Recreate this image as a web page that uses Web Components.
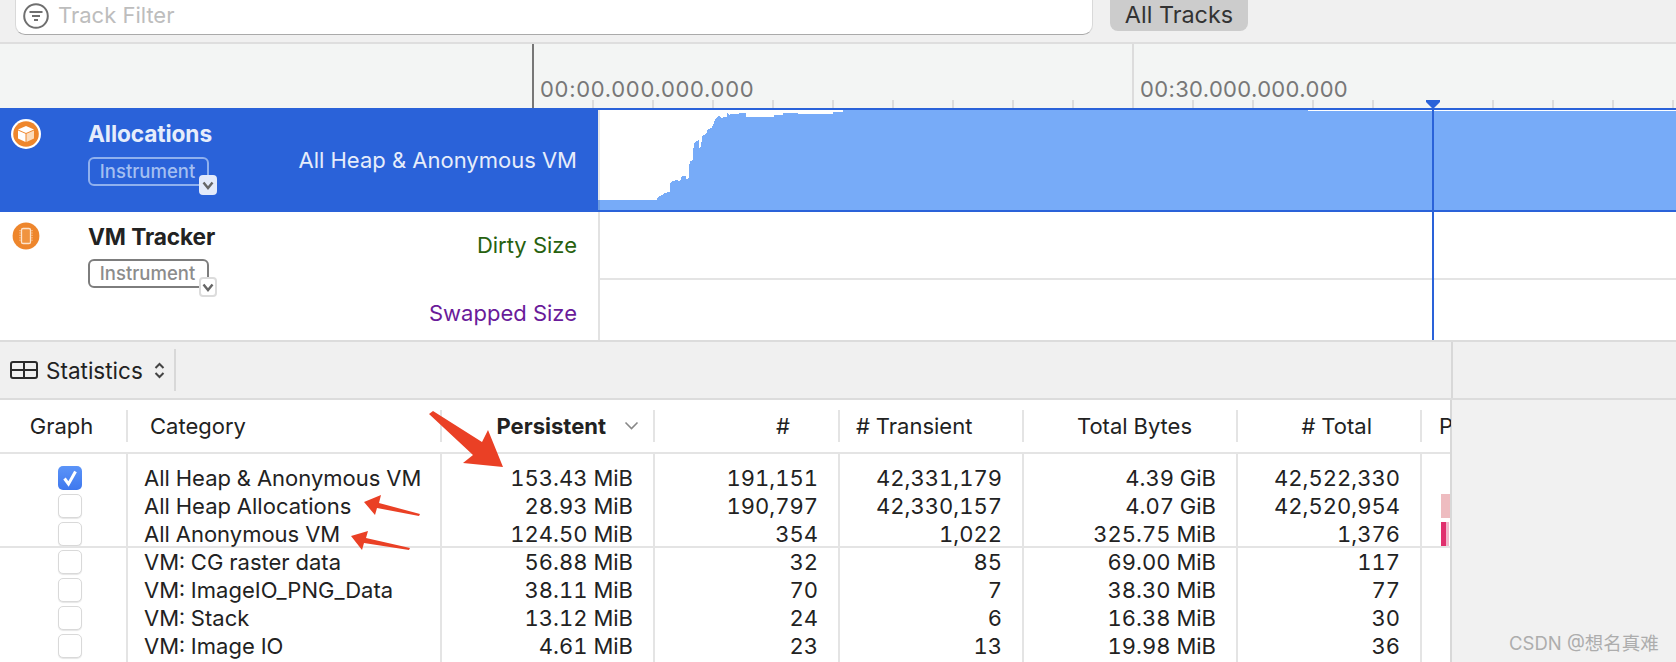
<!DOCTYPE html>
<html>
<head>
<meta charset="utf-8">
<title>Allocations</title>
<style>
  html, body { margin: 0; padding: 0; background: #f1f1f1; }
  body { width: 1676px; height: 662px; overflow: hidden; font-family: Inter, "Noto Sans CJK SC", sans-serif; }
  instruments-window { width: 1676px; height: 662px; }
</style>
</head>
<body>
<instruments-window>
  <filter-bar></filter-bar>
  <time-ruler></time-ruler>
  <track-row selected name="Allocations" icon="box" style="height:104px">
    <track-label style="top:29px">All Heap &amp; Anonymous VM</track-label>
    <heap-graph slot="graph"></heap-graph>
  </track-row>
  <track-row name="VM Tracker" icon="chip" style="height:128px">
    <track-label color="#27610e" style="top:12px">Dirty Size</track-label>
    <track-label color="#6a1b9a" style="top:80px">Swapped Size</track-label>
    <tracker-graph slot="graph"></tracker-graph>
  </track-row>
  <stats-toolbar></stats-toolbar>
  <stats-table>
    <stat-row check="on" name="All Heap &amp; Anonymous VM" persistent="153.43 MiB" count="191,151" transient="42,331,179" bytes="4.39 GiB" total="42,522,330"></stat-row>
    <stat-row name="All Heap Allocations" persistent="28.93 MiB" count="190,797" transient="42,330,157" bytes="4.07 GiB" total="42,520,954" bar="soft"></stat-row>
    <stat-row rule name="All Anonymous VM" persistent="124.50 MiB" count="354" transient="1,022" bytes="325.75 MiB" total="1,376" bar="hot"></stat-row>
    <stat-row name="VM: CG raster data" persistent="56.88 MiB" count="32" transient="85" bytes="69.00 MiB" total="117"></stat-row>
    <stat-row name="VM: ImageIO_PNG_Data" persistent="38.11 MiB" count="70" transient="7" bytes="38.30 MiB" total="77"></stat-row>
    <stat-row name="VM: Stack" persistent="13.12 MiB" count="24" transient="6" bytes="16.38 MiB" total="30"></stat-row>
    <stat-row name="VM: Image IO" persistent="4.61 MiB" count="23" transient="13" bytes="19.98 MiB" total="36"></stat-row>
  </stats-table>
  <play-head></play-head>
  <red-arrows></red-arrows>
  <water-mark>CSDN @想名真难</water-mark>
</instruments-window>

<script>
const FONT = 'Inter, "Noto Sans CJK SC", sans-serif';

class InstrumentsWindow extends HTMLElement {
  constructor() {
    super();
    this.attachShadow({ mode: 'open' }).innerHTML = `
      <style>
        :host { display: flex; flex-direction: column; position: relative; overflow: hidden; }
      </style>
      <slot></slot>`;
  }
}

class FilterBar extends HTMLElement {
  constructor() {
    super();
    this.attachShadow({ mode: 'open' }).innerHTML = `
      <style>
        :host { display: flex; align-items: flex-start; height: 42px; background: #f0f0f0; border-bottom: 2px solid #dedede; padding-left: 15px; gap: 17px; font-family: ${FONT}; }
        .field { width: 1078px; height: 35px; background: #fff; border: 1px solid #d9d9d9; border-top: 0; border-bottom: 1px solid #aaa; border-radius: 0 0 10px 10px; display: flex; align-items: center; box-sizing: border-box; padding: 0 0 3px 7px; gap: 9px; }
        svg { width: 26px; height: 26px; }
        .ph { font-size: 22px; color: #bdbdbd; padding-bottom: 2px; }
        .btn { width: 138px; height: 31px; background: #ccc; border-radius: 0 0 8px 8px; color: #333; font-size: 23.4px; display: flex; align-items: center; justify-content: center; padding-bottom: 2px; box-sizing: border-box; }
      </style>
      <div class="field">
        <svg viewBox="0 0 26 26" fill="none" stroke="#6f6f6f"><circle cx="13" cy="13" r="11.8" stroke-width="2"/><path d="M6.5 9h13M9 13h8M11 17h4" stroke-width="2"/></svg>
        <span class="ph">Track Filter</span>
      </div>
      <div class="btn">All Tracks</div>`;
  }
}

class TimeRuler extends HTMLElement {
  constructor() {
    super();
    this.attachShadow({ mode: 'open' }).innerHTML = `
      <style>
        :host { display: flex; height: 64px; box-sizing: border-box; background-color: #f3f5f4; padding-left: 532px; font-family: ${FONT};
          background-image: repeating-linear-gradient(90deg, #dcdcdc 0 2px, transparent 2px 60px);
          background-position: 592px 100%; background-size: 100% 8px; background-repeat: no-repeat; }
        .mark { width: 600px; flex: none; box-sizing: border-box; border-left: 2px solid #dcdcdc; padding: 30px 0 0 6px; font-size: 22px; letter-spacing: .35px; color: #777; line-height: 30px; }
        .mark.first { border-left-color: #777; letter-spacing: .7px; }
      </style>
      <div class="mark first">00:00.000.000.000</div>
      <div class="mark">00:30.000.000.000</div>`;
  }
}

const trackIcons = {
  box: `<svg viewBox="0 0 30 30" width="30" height="30"><circle cx="15" cy="15" r="15" fill="#fff"/><circle cx="15" cy="15" r="12.8" fill="#ee862c"/>
        <path d="M15 7l8 3.4L15 14l-8-3.6z" fill="#fff"/><path d="M7 11.4l7.5 3.4V23L7 19.6z" fill="#fff"/><path d="M15.5 14.8l7.5-3.4v8.2L15.5 23z" fill="#fbdcbd"/></svg>`,
  chip: `<svg viewBox="0 0 30 30" width="30" height="30"><circle cx="15" cy="15" r="13.4" fill="#ee862c"/>
        <rect x="10.5" y="7.5" width="9" height="15" rx="1.6" fill="#f09440" stroke="#fde3cb" stroke-width="1.3"/>
        <path d="M9 9v12M21 9v12" stroke="#fbd4b2" stroke-width="1" stroke-dasharray="1.2 1.2"/></svg>`
};

class TrackRow extends HTMLElement {
  constructor() {
    super();
    this.attachShadow({ mode: 'open' }).innerHTML = `
      <style>
        :host { display: flex; font-family: ${FONT}; background: #fff; flex: none; }
        .side { width: 598px; flex: none; box-sizing: border-box; position: relative; color: #222; padding: 9px 0 0 11px; display: flex; gap: 47px; }
        :host([selected]) .side { background: #2a62d9; color: #e6edfb; padding-top: 11px; }
        .icon { width: 30px; height: 30px; }
        .info { display: flex; flex-direction: column; align-items: flex-start; gap: 9px; margin-top: 3px; }
        :host([selected]) .info { margin-top: 2px; gap: 10px; }
        .name { font-size: 22.7px; font-weight: 700; line-height: 26px; letter-spacing: -.1px; }
        .graph { flex: 1; border-left: 2px solid #e2e2e2; min-width: 0; }
        :host([selected]) .graph { border-left: 0; }
        .labels { flex: 1; position: relative; margin-right: 21px; }
      </style>
      <div class="side">
        <div class="icon">${trackIcons[this.getAttribute('icon')]}</div>
        <div class="info">
          <div class="name">${this.getAttribute('name')}</div>
          <instrument-badge ${this.hasAttribute('selected') ? 'selected' : ''}></instrument-badge>
        </div>
        <div class="labels"><slot></slot></div>
      </div>
      <div class="graph"><slot name="graph"></slot></div>`;
  }
}

class InstrumentBadge extends HTMLElement {
  constructor() {
    super();
    this.attachShadow({ mode: 'open' }).innerHTML = `
      <style>
        :host { display: block; position: relative; width: 121px; height: 29px; box-sizing: border-box; border: 2px solid #7d7d7d; border-radius: 6px; color: #8c8c8c; font-size: 18.5px; font-weight: 500; text-align: center; line-height: 25px; padding-right: 2px; white-space: nowrap; }
        :host([selected]) { border-color: #8fb0ee; color: #a3bff1; }
        .more { position: absolute; right: -10px; bottom: -11px; width: 18px; height: 20px; box-sizing: border-box; border: 2px solid #dcdcdc; border-radius: 4px; background: #fff; display: flex; align-items: center; justify-content: center; }
        :host([selected]) .more { background: #e3eafa; border-color: #e3eafa; }
        svg { width: 12px; height: 9px; }
      </style>
      Instrument
      <span class="more"><svg viewBox="0 0 12 9" fill="none" stroke="#666" stroke-width="2.4"><path d="M1.5 1.5L6 7l4.5-5.5"/></svg></span>`;
  }
}

class TrackLabel extends HTMLElement {
  constructor() {
    super();
    const color = this.getAttribute('color') || '#e6edfb';
    this.attachShadow({ mode: 'open' }).innerHTML = `
      <style>
        :host { display: block; position: absolute; right: 0; white-space: nowrap; font-size: 22px; line-height: 24px; color: ${color}; }
      </style>
      <slot></slot>`;
  }
}

class HeapGraph extends HTMLElement {
  constructor() {
    super();
    // steps read off the reference: x, y in page pixels
    const steps = [[598,200],[657,200],[658,197],[662,195],[665,193],[668,192],[670,192],[670,183],[673,181],[677,180],[679,181],[681,179],[682,176],[686,176],[686,179],[689,178],[689,168],[690,161],[693,160],[693,153],[694,143],[696,141],[699,140],[699,148],[701,147],[702,138],[703,135],[706,134],[708,129],[712,128],[713,125],[716,118],[719,116],[722,118],[724,117],[727,117],[727,113],[729,115],[731,114],[739,114],[739,113],[746,113],[746,117],[774,117],[774,115],[783,115],[783,113],[798,113],[798,114],[833,114],[833,112],[843,112],[843,110],[1308,110],[1308,111],[1676,111]];
    const pts = steps.map(([x, y]) => `${x - 598},${y - 110}`).join(' ');
    this.attachShadow({ mode: 'open' }).innerHTML = `
      <style>
        :host { display: block; height: 104px; box-sizing: border-box; border-top: 2px solid #2a62d9; border-bottom: 2px solid #2a62d9; background: #fff; }
        svg { display: block; width: 1078px; height: 100px; }
      </style>
      <svg viewBox="0 0 1078 100" shape-rendering="crispEdges"><polygon fill="#77abf8" points="${pts} 1078,100 0,100"/><rect width="2" height="100" fill="#000" opacity=".09"/></svg>`;
  }
}

class TrackerGraph extends HTMLElement {
  constructor() {
    super();
    this.attachShadow({ mode: 'open' }).innerHTML = `
      <style>
        :host { display: block; height: 128px; box-sizing: border-box; }
        .lane { height: 66px; border-bottom: 2px solid #e4e4e4; }
      </style>
      <div class="lane"></div>`;
  }
}

class StatsToolbar extends HTMLElement {
  constructor() {
    super();
    this.attachShadow({ mode: 'open' }).innerHTML = `
      <style>
        :host { display: flex; align-items: center; height: 56px; flex: none; background: #f0f0f0; border-top: 2px solid #dcdcdc; border-bottom: 2px solid #dcdcdc; font-family: ${FONT}; font-size: 22.5px; color: #222; padding-left: 10px; }
        .table { width: 28px; height: 18px; margin-right: 8px; }
        .updown { width: 11px; height: 17px; margin-left: 11px; }
        .sep { width: 2px; height: 42px; background: #d8d8d8; margin-left: 9px; }
        .fill { flex: 1; }
        .edge { width: 2px; height: 56px; background: #d8d8d8; margin-right: 223px; }
      </style>
      <svg class="table" viewBox="0 0 28 18" fill="none" stroke="#2a2a2a" stroke-width="2"><rect x="1" y="1" width="26" height="16" rx="2"/><path d="M1 9h26M14 1v16"/></svg>
      <span>Statistics</span>
      <svg class="updown" viewBox="0 0 11 17" fill="none" stroke="#444" stroke-width="2"><path d="M1.5 6L5.5 2l4 4M1.5 11l4 4 4-4"/></svg>
      <span class="sep"></span>
      <span class="fill"></span>
      <span class="edge"></span>`;
  }
}

const COLS = '128px 314px 213px 185px 184px 214px 184px 29px';
const LINE = '#e4e4e4';

class StatsTable extends HTMLElement {
  constructor() {
    super();
    const edges = [126, 440, 653, 838, 1022, 1236, 1420];
    const lines = edges.map(x => `linear-gradient(${LINE},${LINE}) ${x}px 0/2px 100% no-repeat`).join(',');
    this.attachShadow({ mode: 'open' }).innerHTML = `
      <style>
        :host { display: flex; flex: 1; font-family: ${FONT}; font-size: 22px; color: #222; min-height: 0; font-variant-numeric: tabular-nums; }
        .main { width: 1450px; flex: none; background: #fff; }
        .edge { width: 2px; background: #d8d8d8; flex: none; }
        .side { flex: 1; background: #f1f1f1; }
        .head { display: grid; grid-template-columns: ${COLS}; height: 52px; padding-top: 10px; box-sizing: border-box; }
        .head div { height: 32px; line-height: 32px; box-sizing: border-box; border-right: 2px solid ${LINE}; white-space: nowrap; overflow: hidden; position: relative; }
        .head div:last-child { border-right: 0; }
        .r { text-align: right; }
        .rule { height: 2px; background: ${LINE}; }
        .body { padding-top: 10px; height: 220px; background: ${lines}; }
        .c { text-align: center; padding-right: 3px; }
        .p { padding-left: 22px; }
        .bold { font-weight: 700; padding-right: 47px; }
        svg { position: absolute; right: 14px; top: 11px; width: 15px; height: 9px; }
      </style>
      <div class="main">
        <div class="head">
          <div class="c">Graph</div>
          <div class="p">Category</div>
          <div class="r bold">Persistent<svg viewBox="0 0 15 9" fill="none" stroke="#888" stroke-width="1.6"><path d="M1.5 1.5L7.5 7.5l6-6"/></svg></div>
          <div class="r" style="padding-right:48px">#</div>
          <div class="p" style="padding-left:16px">&#35; Transient</div>
          <div class="r" style="padding-right:44px">Total Bytes</div>
          <div class="r" style="padding-right:48px">&#35; Total</div>
          <div style="padding-left:17px">P</div>
        </div>
        <div class="rule"></div>
        <div class="body"><slot></slot></div>
      </div>
      <div class="edge"></div>
      <div class="side"></div>`;
  }
}

class StatCheck extends HTMLElement {
  constructor() {
    super();
    const on = this.hasAttribute('on');
    this.attachShadow({ mode: 'open' }).innerHTML = `
      <style>
        :host { display: flex; width: 24px; height: 24px; box-sizing: border-box; border-radius: 5px; align-items: center; justify-content: center;
          border: 1.5px solid #d9d9d9; background: #fff; box-shadow: 0 1px 1px #e6e6e6; }
        :host([on]) { border: 0; background: linear-gradient(#5b94f8, #3f78ee); box-shadow: none; }
      </style>
      ${on ? '<svg width="16" height="18" viewBox="0 0 16 18" fill="none" stroke="#fff" stroke-width="3"><path d="M2.5 9.5L6.5 15L13.5 2.5"/></svg>' : ''}`;
  }
}

class StatRow extends HTMLElement {
  constructor() {
    super();
    const a = n => this.getAttribute(n) || '';
    const bar = a('bar');
    this.attachShadow({ mode: 'open' }).innerHTML = `
      <style>
        :host { display: grid; grid-template-columns: ${COLS}; height: 28px; line-height: 28px; white-space: nowrap; }
        :host([rule]) { background: linear-gradient(${LINE},${LINE}) 0 26px/100% 2px no-repeat; }
        .box { display: flex; padding: 2px 0 0 58px; }
        .name { padding-left: 16px; }
        .r { text-align: right; padding-right: 22px; }
        .bar { height: 24px; margin: 2px 1px 0 19px; }
        .soft { background: #eebcc0; }
        .hot { background: linear-gradient(90deg, #e0306e 0 5px, #f2b8cc 5px 8px, transparent 8px); }
      </style>
      <div class="box"><stat-check ${a('check') === 'on' ? 'on' : ''}></stat-check></div>
      <div class="name">${a('name')}</div>
      <div class="r">${a('persistent')}</div>
      <div class="r">${a('count')}</div>
      <div class="r">${a('transient')}</div>
      <div class="r">${a('bytes')}</div>
      <div class="r">${a('total')}</div>
      <div><div class="bar ${bar}"></div></div>`;
  }
}

class PlayHead extends HTMLElement {
  constructor() {
    super();
    this.attachShadow({ mode: 'open' }).innerHTML = `
      <style>
        :host { display: block; position: absolute; left: 1426px; top: 100px; width: 14px; height: 240px; }
        svg { display: block; }
      </style>
      <svg width="14" height="240" viewBox="0 0 14 240"><path d="M0 0h14v2l-6 6v232H6V8L0 2z" fill="#2a62d9"/></svg>`;
  }
}

class RedArrows extends HTMLElement {
  constructor() {
    super();
    this.attachShadow({ mode: 'open' }).innerHTML = `
      <style>
        :host { display: block; position: absolute; left: 0; top: 0; pointer-events: none; }
        svg { display: block; }
      </style>
      <svg width="560" height="662" viewBox="0 0 560 662" fill="#ea4025">
        <polygon points="429,414 433,411 482,442 488,430 503,467 463,463 473,455"/>
        <polygon points="364,502 381,495 379,503 420,514 419,516 377,508 375,515"/>
        <polygon points="351,536 368,531 366,538 410,548 409,550 364,543 362,550"/>
      </svg>`;
  }
}

class WaterMark extends HTMLElement {
  constructor() {
    super();
    this.attachShadow({ mode: 'open' }).innerHTML = `
      <style>
        :host { display: block; position: absolute; left: 1509px; top: 632px; font-family: ${FONT}; font-size: 18.5px; line-height: 22px; color: #adadad; white-space: nowrap; }
      </style>
      <slot></slot>`;
  }
}

customElements.define('instruments-window', InstrumentsWindow);
customElements.define('filter-bar', FilterBar);
customElements.define('time-ruler', TimeRuler);
customElements.define('instrument-badge', InstrumentBadge);
customElements.define('track-label', TrackLabel);
customElements.define('track-row', TrackRow);
customElements.define('heap-graph', HeapGraph);
customElements.define('tracker-graph', TrackerGraph);
customElements.define('stats-toolbar', StatsToolbar);
customElements.define('stats-table', StatsTable);
customElements.define('stat-check', StatCheck);
customElements.define('stat-row', StatRow);
customElements.define('play-head', PlayHead);
customElements.define('red-arrows', RedArrows);
customElements.define('water-mark', WaterMark);
</script>
</body>
</html>
